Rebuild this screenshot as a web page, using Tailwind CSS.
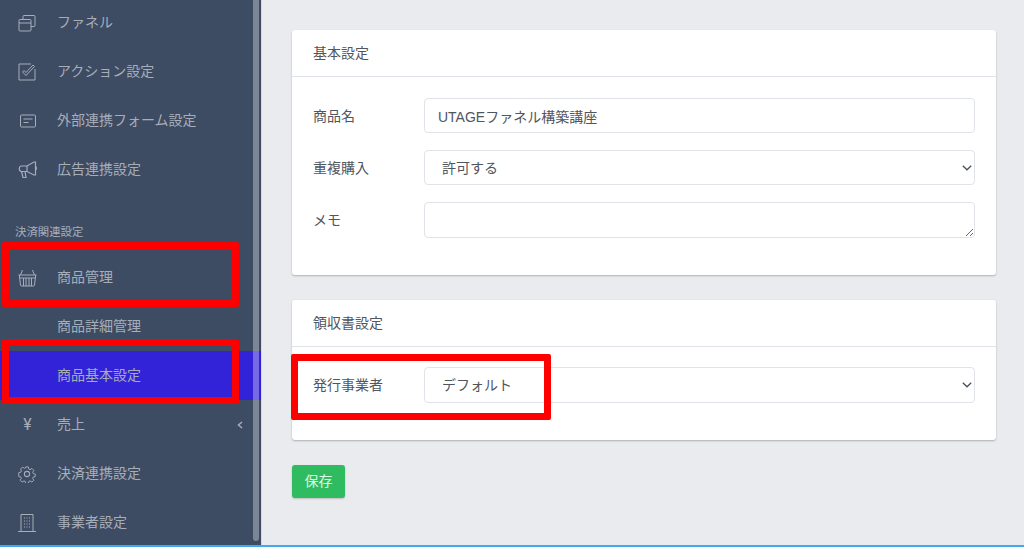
<!DOCTYPE html>
<html lang="ja">
  <head>
    <meta charset="UTF-8" />
    <meta name="viewport" content="width=device-width, initial-scale=1.0" />
    <title>商品基本設定</title>
    <script src="https://cdn.jsdelivr.net/npm/@tailwindcss/browser@4"></script>
  </head>
  <body class="overflow-hidden">
    <div class="relative flex h-[547px] w-[1024px] flex-col overflow-hidden bg-[#e9ebee] font-['Roboto','Noto_Sans_CJK_JP',sans-serif] text-[14px] text-[#50565e]">
      <div class="flex min-h-0 flex-1">
        <!-- sidebar -->
        <aside class="relative w-[261px] shrink-0 overflow-hidden bg-[#3d4b63] text-[#a6aeba]">
          <div class="-mt-[2px] w-[253px]">
            <a class="flex h-[49px] items-center">
              <svg class="ml-[18px] h-[18px] w-[18px]" viewBox="0 0 18 18" fill="none" stroke="currentColor" stroke-width="1"><rect x="1" y="5.500" width="12" height="11.500" rx="1"/><path d="M1 9h12M5 5.500V2.500a1 1 0 0 1 1-1h10a1 1 0 0 1 1 1v9a1 1 0 0 1-1 1h-3"/></svg>
              <span class="ml-[21px]">ファネル</span>
            </a>
            <a class="flex h-[49px] items-center">
              <svg class="ml-[18px] h-[18px] w-[18px]" viewBox="0 0 18 18" fill="none" stroke="currentColor" stroke-width="1"><path d="M13 1H1v16h16V6"/><path d="M4.500 9l3.500 3.500 8.500-9-1.500-1.500-7 7.500-2-2z"/></svg>
              <span class="ml-[21px]">アクション設定</span>
            </a>
            <a class="flex h-[49px] items-center">
              <svg class="ml-[20px] h-[14px] w-[16px]" viewBox="0 0 16 14" fill="none" stroke="currentColor" stroke-width="1"><rect x="0.500" y="1" width="15" height="12" rx="1"/><path d="M3.500 5h9M3.500 8.500h5"/></svg>
              <span class="ml-[21px]">外部連携フォーム設定</span>
            </a>
            <a class="flex h-[49px] items-center">
              <svg class="ml-[17px] h-[18px] w-[21px]" viewBox="0 0 21 18" fill="none" stroke="currentColor" stroke-width="1.200"><path d="M4 5h6l7-4h1.500v13H17l-7-3.500H4a3 3 0 0 1 0-5.500z"/><path d="M4.500 10.500l1.500 6h3l-1-6M10 5v5.500M18.500 5.500c1.200.5 1.200 3 0 3.500"/></svg>
              <span class="ml-[19px]">広告連携設定</span>
            </a>
            <div class="flex h-[59px] items-end pb-[13px] pl-[15px] text-[11.400px] leading-[16px]">決済関連設定</div>
            <a class="flex h-[49px] items-center">
              <svg class="ml-[18px] h-[18px] w-[19px]" viewBox="0 0 19 18" fill="none" stroke="currentColor" stroke-width="1"><path d="M4.500 1L2.500 6M14.500 1l2 5M.5 6h18M1.500 6v2l1 8a1 1 0 0 0 1 1h12a1 1 0 0 0 1-1l1-8V6M2 9h15M5.500 9v8M8 9v8M11 9v8M13.500 9v8"/></svg>
              <span class="ml-[20px]">商品管理</span>
            </a>
            <a class="flex h-[49px] items-center pl-[57px]">商品詳細管理</a>
            <a class="flex h-[49px] w-[261px] items-center bg-[#3323d8] pl-[57px]">商品基本設定</a>
            <a class="flex h-[49px] items-center">
              <span class="ml-[21px] w-[13px] text-center text-[16px] leading-none">¥</span>
              <span class="ml-[23px]">売上</span>
              <svg class="ml-auto mr-[10px] h-[8px] w-[6px]" viewBox="0 0 6 8" fill="none" stroke="currentColor" stroke-width="1.500"><path d="M5 1L1.500 4 5 7"/></svg>
            </a>
            <a class="flex h-[49px] items-center">
              <svg class="ml-[18px] h-[18px] w-[18px]" viewBox="0 0 24 24" fill="none" stroke="currentColor" stroke-width="1.400"><circle cx="12" cy="12" r="3.500"/><path d="M10 1.500h4l.7 3.300 1.800.8 2.900-1.800 2.800 2.800-1.800 2.900.8 1.800 3 .7v3.800l-3 .7-.8 1.800 1.800 2.900-2.800 2.800-2.900-1.800-1.800.8-.7 2.900h-4l-.7-2.900-1.800-.8-2.900 1.800-2.800-2.800 1.800-2.900-.8-1.800-3-.7V10l3-.7.8-1.800L2.600 4.600l2.800-2.800 2.900 1.800 1.800-.8z" transform="translate(12 12) scale(.9) translate(-12 -12)"/></svg>
              <span class="ml-[21px]">決済連携設定</span>
            </a>
            <a class="flex h-[49px] items-center">
              <svg class="ml-[18px] h-[18px] w-[18px]" viewBox="0 0 18 18" fill="none" stroke="currentColor" stroke-width="1"><path d="M0 17.500h18M3 17.500V.5h12v17"/><path d="M6 4h1M8.500 4h1M11 4h1M6 7h1M8.500 7h1M11 7h1M6 10h1M8.500 10h1M11 10h1M6 13h1M8.500 13h1M11 13h1" stroke-width="1.200"/></svg>
              <span class="ml-[21px]">事業者設定</span>
            </a>
          </div>
          <!-- scrollbar thumb -->
          <div class="absolute top-0 right-[2px] h-[541px] w-[6px] rounded-b-full bg-white/33"></div>
        </aside>

        <!-- content -->
        <main class="min-w-0 flex-1 border-l border-[#d8dade] pt-[30px] pr-[28px] pl-[30px]">
          <section class="h-[245px] rounded-[3px] bg-white shadow-[0_1px_2px_rgba(0,0,0,0.25)]">
            <h2 class="flex h-[47px] items-center border-b border-[#dfe2e8] px-[21px]">基本設定</h2>
            <div class="flex flex-col gap-[17px] px-[21px] pt-[21px]">
              <div class="flex items-center">
                <label class="w-[111px] shrink-0 pt-[1px]">商品名</label>
                <input class="h-[35px] w-full rounded-[4px] border border-[#e0e3e8] bg-white px-[13px] font-['Liberation_Sans','Noto_Sans_CJK_JP',sans-serif]" value="UTAGEファネル構築講座" />
              </div>
              <div class="relative flex items-center">
                <label class="w-[111px] shrink-0 pt-[1px]">重複購入</label>
                <select class="h-[35px] w-full appearance-none rounded-[4px] border border-[#e0e3e8] bg-white px-[17px] pt-[1px]"><option>許可する</option></select>
                <svg class="absolute top-[15px] right-[3px] h-[6px] w-[10px]" viewBox="0 0 10 6" fill="none" stroke="#4a505a" stroke-width="1.300"><path d="M.8.800L5 4.800 9.200.800"/></svg>
              </div>
              <div class="flex items-center">
                <label class="w-[111px] shrink-0">メモ</label>
                <textarea class="block h-[36px] w-full rounded-[4px] border border-[#e0e3e8] bg-white px-[13px]"></textarea>
              </div>
            </div>
          </section>

          <section class="mt-[25px] h-[140px] rounded-[3px] bg-white shadow-[0_1px_2px_rgba(0,0,0,0.25)]">
            <h2 class="flex h-[47px] items-center border-b border-[#dfe2e8] px-[21px]">領収書設定</h2>
            <div class="px-[21px] pt-[20px]">
              <div class="relative flex items-center">
                <label class="w-[111px] shrink-0">発行事業者</label>
                <select class="h-[36px] w-full appearance-none rounded-[4px] border border-[#e0e3e8] bg-white px-[17px]"><option>デフォルト</option></select>
                <svg class="absolute top-[15px] right-[3px] h-[6px] w-[10px]" viewBox="0 0 10 6" fill="none" stroke="#4a505a" stroke-width="1.300"><path d="M.8.800L5 4.800 9.200.800"/></svg>
              </div>
            </div>
          </section>

          <button class="mt-[25px] h-[33px] w-[53px] rounded-[3px] bg-[#2fbb5f] text-white/85 shadow-[0_1px_2px_rgba(0,0,0,0.2)]">保存</button>
        </main>
      </div>
      <div class="h-[2px] shrink-0 bg-[#3fa9f0]"></div>

      <!-- red annotation boxes drawn over the screenshot -->
      <div class="absolute top-[242px] left-[2px] h-[65px] w-[237px] rounded-[2px] border-[7px] border-[#ff0000]"></div>
      <div class="absolute top-[339px] left-[2px] h-[65px] w-[237px] rounded-[2px] border-[7px] border-[#ff0000]"></div>
      <div class="absolute top-[354px] left-[291px] h-[66px] w-[260px] rounded-[2px] border-[7px] border-[#ff0000]"></div>
    </div>
  </body>
</html>
